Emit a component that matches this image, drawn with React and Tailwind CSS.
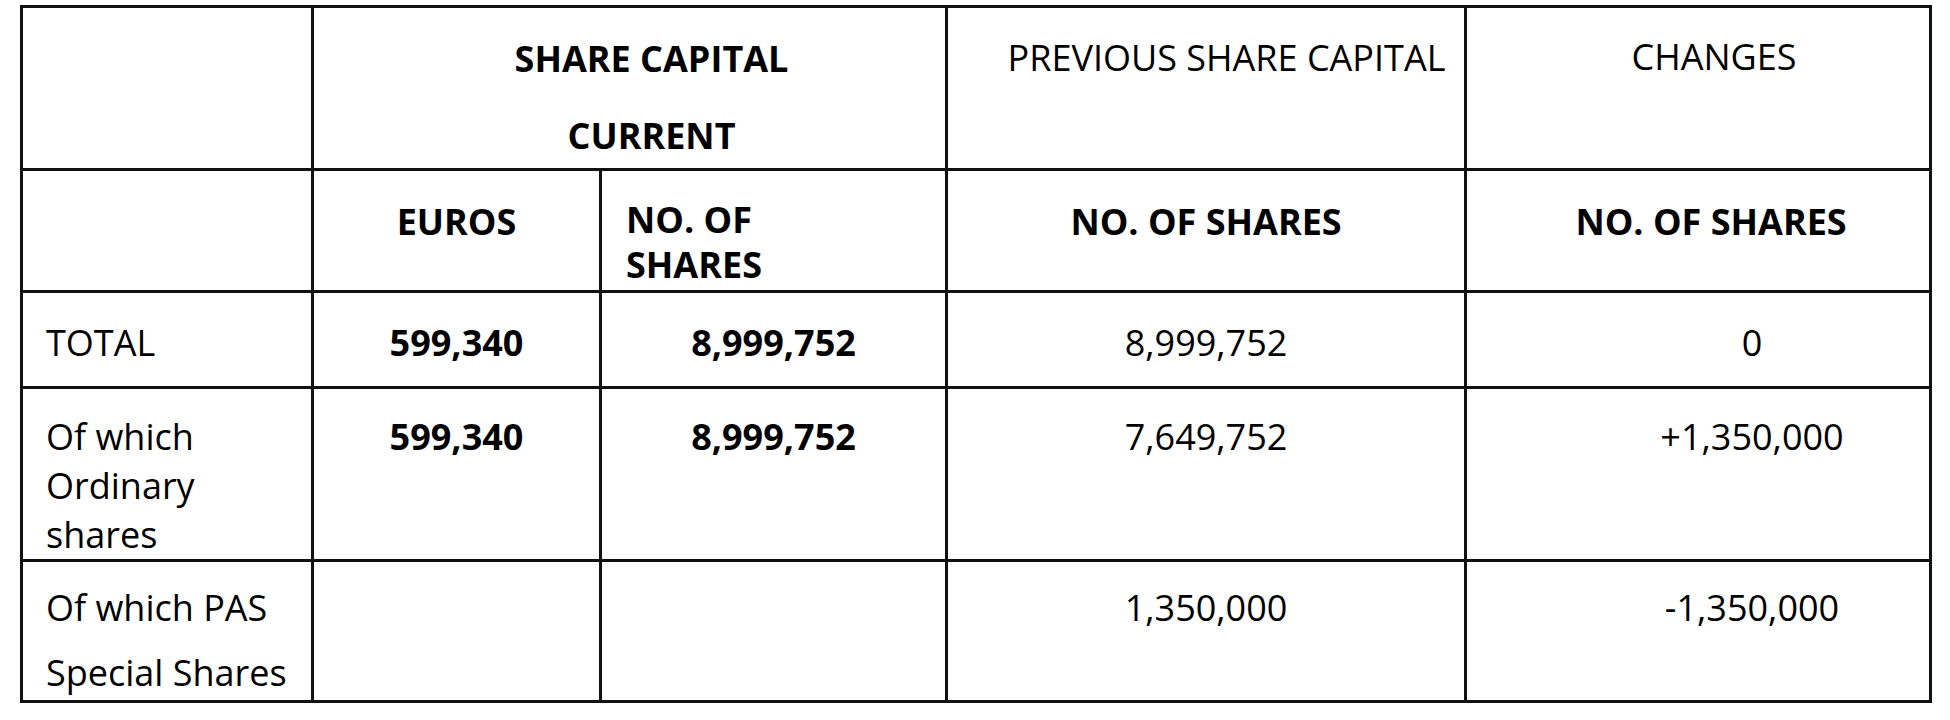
const Line = ({ children, className = '' }) => <div className={className}>{children}</div>;

export default function App() {
  return (
    <div className="w-[1950px] h-[720px] bg-white pt-[5px] pl-[20px] text-black font-['Open_Sans',_'Liberation_Sans',_sans-serif]">
      <table className="table-fixed border-collapse w-[1909px] text-[36px] leading-[49px]">
        <colgroup>
          <col className="w-[291px]" />
          <col className="w-[288px]" />
          <col className="w-[346px]" />
          <col className="w-[519px]" />
          <col className="w-[465px]" />
        </colgroup>
        <tbody>
          <tr className="h-[163px]">
            <td className="border-[3px] border-[#111]"></td>
            <td colSpan={2} className="border-[3px] border-[#111] align-top pt-[26px] pl-[44px] text-center font-bold">
              <Line>SHARE CAPITAL</Line>
              <Line className="mt-[28px]">CURRENT</Line>
            </td>
            <td className="border-[3px] border-[#111] align-top pt-[25px] pl-[45px] pr-[4px] text-center whitespace-nowrap">
              PREVIOUS SHARE CAPITAL
            </td>
            <td className="border-[3px] border-[#111] align-top pt-[24px] pl-[32px] text-center">CHANGES</td>
          </tr>
          <tr className="h-[122px]">
            <td className="border-[3px] border-[#111]"></td>
            <td className="border-[3px] border-[#111] align-top pt-[26px] text-center font-bold">EUROS</td>
            <td className="border-[3px] border-[#111] align-top pt-[26px] pl-[24px] font-bold leading-[45px]">
              <Line>NO. OF</Line>
              <Line>SHARES</Line>
            </td>
            <td className="border-[3px] border-[#111] align-top pt-[26px] text-center font-bold">NO. OF SHARES</td>
            <td className="border-[3px] border-[#111] align-top pt-[26px] pl-[26px] text-center font-bold">NO. OF SHARES</td>
          </tr>
          <tr className="h-[96px]">
            <td className="border-[3px] border-[#111] align-top pt-[25px] pl-[23px]">TOTAL</td>
            <td className="border-[3px] border-[#111] align-top pt-[25px] text-center font-bold">599,340</td>
            <td className="border-[3px] border-[#111] align-top pt-[25px] text-center font-bold">8,999,752</td>
            <td className="border-[3px] border-[#111] align-top pt-[25px] text-center">8,999,752</td>
            <td className="border-[3px] border-[#111] align-top pt-[25px] pl-[108px] text-center">0</td>
          </tr>
          <tr className="h-[173px]">
            <td className="border-[3px] border-[#111] align-top pt-[23px] pl-[23px]">
              <Line>Of which</Line>
              <Line>Ordinary</Line>
              <Line>shares</Line>
            </td>
            <td className="border-[3px] border-[#111] align-top pt-[23px] text-center font-bold">599,340</td>
            <td className="border-[3px] border-[#111] align-top pt-[23px] text-center font-bold">8,999,752</td>
            <td className="border-[3px] border-[#111] align-top pt-[23px] text-center">7,649,752</td>
            <td className="border-[3px] border-[#111] align-top pt-[23px] pl-[108px] text-center">+1,350,000</td>
          </tr>
          <tr className="h-[141px]">
            <td className="border-[3px] border-[#111] align-top pt-[21px] pl-[23px] whitespace-nowrap">
              <Line>Of which PAS</Line>
              <Line className="mt-[16px]">Special Shares</Line>
            </td>
            <td className="border-[3px] border-[#111]"></td>
            <td className="border-[3px] border-[#111]"></td>
            <td className="border-[3px] border-[#111] align-top pt-[21px] text-center">1,350,000</td>
            <td className="border-[3px] border-[#111] align-top pt-[21px] pl-[108px] text-center">-1,350,000</td>
          </tr>
        </tbody>
      </table>
    </div>
  );
}
